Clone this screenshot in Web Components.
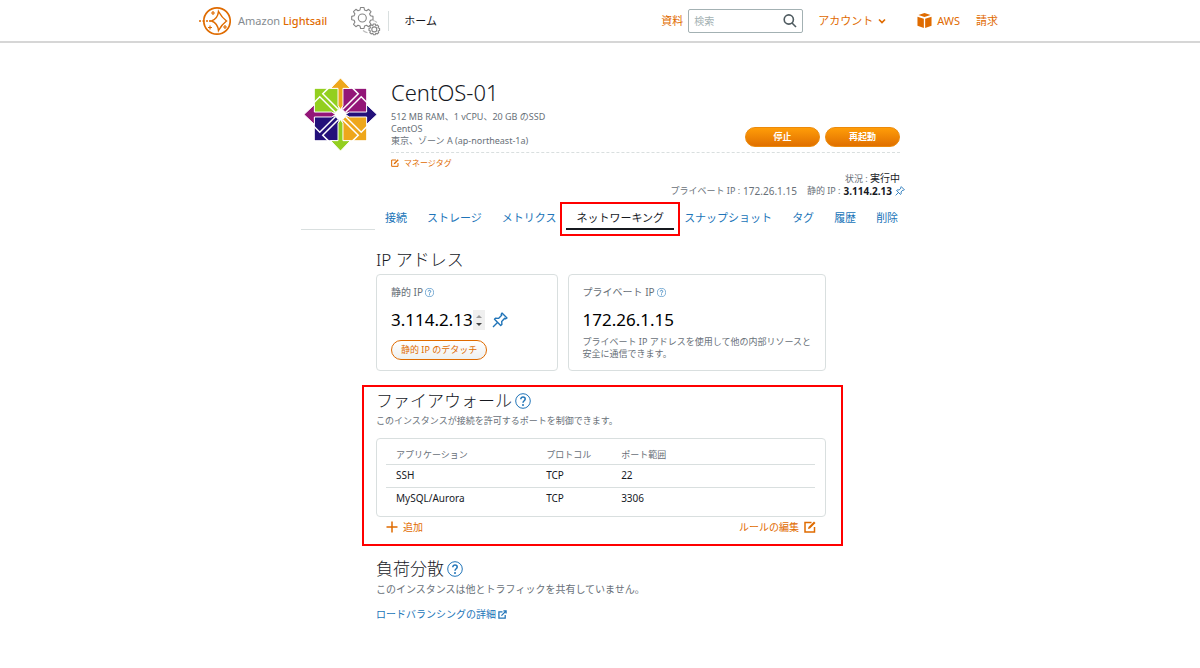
<!DOCTYPE html>
<html lang="ja">
<head>
<meta charset="utf-8">
<meta name="viewport" content="width=device-width, initial-scale=1">
<title>CentOS-01 - Amazon Lightsail</title>
<style>
  :root {
    --orange: #df6b00;
    --blue: #2074b8;
    --ink: #16191f;
    --muted: #687078;
    --line: #d9dfdf;
    --mark: #ff0000;
  }
  body {
    margin: 0;
    background: #fff;
    color: var(--ink);
    font-family: "Noto Sans", "Noto Sans CJK JP", sans-serif;
    font-size: 10px;
    line-height: 12px;
  }
  main {
    max-width: 600px;
    margin: 0 auto;
    padding: 35px 0 40px;
  }
  .content {
    max-width: 450px;
    margin: 0 74px 0 76px;
  }
  .cards {
    display: flex;
    gap: 10px;
  }
  .cards info-card:first-child { flex: 182; }
  .cards info-card:last-child { flex: 258; }
</style>
</head>
<body>
<site-header></site-header>
<main>
  <instance-summary></instance-summary>
  <instance-tabs></instance-tabs>
  <div class="content">
    <section-title>IP アドレス</section-title>
    <div class="cards">
      <info-card label="静的 IP" address="3.114.2.13" pinned>
        <pill-button kind="outline">静的 IP のデタッチ</pill-button>
      </info-card>
      <info-card label="プライベート IP" address="172.26.1.15">プライベート IP アドレスを使用して他の内部リソースと<br>安全に通信できます。</info-card>
    </div>
    <firewall-panel></firewall-panel>
    <load-balancing></load-balancing>
  </div>
</main>

<script>
const ICONS = {
  lightsail: ['0 0 32 30', `<g fill="none" stroke="#df6b00" stroke-width="1.7"><circle cx="18" cy="15" r="13.2"/><path d="M19.500 5.500C19 10 16.500 13.500 12.500 15C16.500 16.500 19 20 19.500 24.500C21.500 21 24 17.500 27.500 15C24 12.500 21.500 9 19.500 5.500Z" stroke-width="1.500"/><path d="M0 15H2M3.500 15H5.500M7 15H9M10 15H12" stroke-width="1.300"/><path d="M14 5V9M12 7H16M11 19.500V23.500M9 21.500H13M26 19V23M24 21H28" stroke-width="1.200"/></g>`],
  gears: ['0 0 30 30', `<g fill="none" stroke="#858585" stroke-width="1.100" stroke-linejoin="round"><path d="M9.500 1.500H13L13.500 4L15.500 4.800L17.600 3.300L20 5.700L18.600 7.900L19.500 9.800L22 10.400V13.700L19.500 14.200L18.600 16.200L20 18.300L17.600 20.700L15.500 19.300L13.500 20.100L13 22.500H9.600L9 20.100L7 19.300L4.900 20.700L2.500 18.300L3.900 16.200L3.100 14.200L.7 13.700V10.400L3.100 9.800L3.900 7.900L2.500 5.700L4.900 3.300L7 4.800L9 4Z"/><circle cx="11.300" cy="12" r="4"/><path d="M22.300 18H24.300L24.800 19.600L26.300 18.900L27.700 20.300L27 21.800L28.600 22.400V24.400L27 24.900L27.700 26.500L26.300 27.900L24.800 27.200L24.300 28.700H22.300L21.800 27.200L20.200 27.900L18.800 26.500L19.500 24.900L18 24.400V22.400L19.500 21.800L18.800 20.300L20.200 18.900L21.800 19.600Z"/><circle cx="23.300" cy="23.400" r="2.500"/><path d="M12 24.500Q14 26.300 16.500 26.700M22 14.500Q24 14.700 26 16.500" stroke="#bbb"/></g>`],
  search: ['0 0 14 14', `<g fill="none" stroke="#4f5b60" stroke-width="1.600"><circle cx="5.800" cy="5.500" r="4.600"/><path d="M9 9L13 13"/></g>`],
  chevron: ['0 0 8 8', `<path d="M1 2.500L4 5.500L7 2.500" fill="none" stroke="#df6b00" stroke-width="1.700"/>`],
  cube: ['0 0 16 16', `<path d="M8 0L14.500 2L8 4.200L1.500 2ZM.5 4L7.300 6V16L.5 13.500ZM15.500 4L8.700 6V16L15.500 13.500Z" fill="#df6b00"/>`],
  edit: ['0 0 12 12', `<path d="M7.500 1.500H1V11H10.500V6" fill="none" stroke="#df6b00" stroke-width="1.500"/><path d="M4 8L4.500 6L10 .5L11.500 2L6 7.500Z" fill="#df6b00"/>`],
  pin: ['0 0 16 16', `<path d="M10 1L15 6L13.500 6.800L12.700 6.300L9.700 9.500L9.900 12.500L8.700 13.500L2.500 7.300L3.500 6.200L6.500 6.400L9.700 3.300L9.200 2.400ZM5.500 10.500L1 15" fill="none" stroke="#2074b8" stroke-width="1.400" stroke-linejoin="round"/>`],
  plus: ['0 0 12 12', `<path d="M6 .5V11.500M.5 6H11.500" stroke="#df6b00" stroke-width="1.500"/>`],
  external: ['0 0 10 10', `<path d="M5 2H1V9H8V5.500M3.800 6.200L8.800 1.200M6 1H9V4" fill="none" stroke="#2074b8" stroke-width="1.400"/>`],
  help: ['0 0 16 16', `<circle cx="8" cy="8" r="7.300" fill="none" stroke="#2074b8"/><path d="M5.800 6.200C5.800 3.300 10.200 3.400 10.200 6.100C10.200 7.800 8 7.800 8 9.800" fill="none" stroke="#2074b8" stroke-width="1.500"/><circle cx="8" cy="12" r="1" fill="#2074b8"/>`],
  centos: ['3 3 75 75', `
    <path d="M15 14H39V38H15Z" fill="#93cf1f"/><path d="M43 14H67V38H43Z" fill="#931678"/>
    <path d="M15 42H39V66H15Z" fill="#23107a"/><path d="M43 42H67V66H43Z" fill="#eea71b"/>
    <g fill="none" stroke="#fff" stroke-width="1.500">
      <path id="cut" d="M29 13L23 19L39 35M14 28L20 22L36 38"/>
      <use href="#cut" transform="rotate(90 41 40)"/><use href="#cut" transform="rotate(180 41 40)"/><use href="#cut" transform="rotate(270 41 40)"/>
    </g>
    <g stroke="#fff" stroke-width="1">
      <path d="M41 3L51 13.500H43.500V31L41 35L38.500 31V13.500H31Z" fill="#eea71b"/>
      <path d="M41 3L51 13.500H43.500V31L41 35L38.500 31V13.500H31Z" fill="#23107a" transform="rotate(90 41 40)"/>
      <path d="M41 3L51 13.500H43.500V31L41 35L38.500 31V13.500H31Z" fill="#93cf1f" transform="rotate(180 41 40)"/>
      <path d="M41 3L51 13.500H43.500V31L41 35L38.500 31V13.500H31Z" fill="#931678" transform="rotate(270 41 40)"/>
    </g>
    <circle cx="41" cy="40" r="5.500" fill="#fff"/>`]
};

const RESET = `
  *, *::before { box-sizing: border-box; }
  a { color: inherit; text-decoration: none; }
  button, input { font: inherit; color: inherit; margin: 0; padding: 0; border: 0; background: none; }
  h1, h2, p { margin: 0; font-weight: 400; }
`;

class BaseElement extends HTMLElement {
  connectedCallback() {
    if (this.shadowRoot) return;
    this.attachShadow({ mode: 'open' });
    this.shadowRoot.innerHTML = `<style>${RESET}${this.styles()}</style>${this.markup()}`;
  }
}

// <app-icon name="pin" size="16">, size is the width in pixels
class AppIcon extends BaseElement {
  styles() {
    return `
      :host { display: inline-block; flex: none; width: ${this.getAttribute('size')}px; line-height: 0; }
      svg { display: block; width: 100%; }
    `;
  }

  markup() {
    const [box, shapes] = ICONS[this.getAttribute('name')];
    return `<svg viewBox="${box}" aria-hidden="true">${shapes}</svg>`;
  }
}

class SiteHeader extends BaseElement {
  styles() {
    return `
      :host { display: block; border-bottom: 2px solid #d6d6d6; font-size: 11px; line-height: 16px; }
      .bar { display: flex; align-items: center; max-width: 802px; height: 41px; margin: 0 auto; color: var(--orange); }
      .brand { display: flex; align-items: center; gap: 7px; }
      .brand span { color: #858b90; }
      .brand b { font-weight: 500; color: var(--orange); }
      .gears { display: flex; margin-left: 24px; }
      .home { margin-left: 7px; padding: 2px 0 2px 15px; border-left: 1px solid var(--line); color: var(--ink); }
      nav { display: flex; align-items: center; margin-left: auto; padding-right: 3px; }
      .search { display: flex; align-items: center; width: 115px; height: 24px; margin: 0 15px 0 5px; padding: 0 5px; border: 1px solid #a3b1b3; border-radius: 2px; }
      .search input { flex: 1; min-width: 0; font-size: 10px; color: var(--ink); outline: 0; }
      .search input::placeholder { color: #a3b1b3; opacity: 1; }
      .account { display: flex; align-items: center; gap: 5px; margin-right: 31px; }
      .aws { display: flex; align-items: center; gap: 5px; margin-right: 16px; }
    `;
  }

  markup() {
    return `
      <header class="bar">
        <a class="brand" href="#"><app-icon name="lightsail" size="32"></app-icon><div><span>Amazon</span> <b>Lightsail</b></div></a>
        <div class="gears"><app-icon name="gears" size="30"></app-icon></div>
        <a class="home" href="#">ホーム</a>
        <nav>
          <a href="#">資料</a>
          <label class="search"><input type="text" placeholder="検索" aria-label="検索"><app-icon name="search" size="14"></app-icon></label>
          <button class="account">アカウント<app-icon name="chevron" size="8"></app-icon></button>
          <a class="aws" href="#"><app-icon name="cube" size="15"></app-icon>AWS</a>
          <a href="#">請求</a>
        </nav>
      </header>
    `;
  }
}

class PillButton extends BaseElement {
  styles() {
    return `
      :host { display: inline-block; vertical-align: top; }
      button { display: block; height: 20px; border-radius: 10px; font-size: 9px; line-height: 18px; white-space: nowrap; cursor: pointer; }
      .solid { width: 75px; background: linear-gradient(#ff9d08, #e07000); border: 1px solid #ec8a0a; color: #fff; font-weight: 600; }
      .outline { padding: 0 9px; background: linear-gradient(#fff, #eef0f0); border: 1px solid var(--orange); color: var(--orange); }
    `;
  }

  markup() {
    return `<button class="${this.getAttribute('kind') || 'solid'}"><slot></slot></button>`;
  }
}

class InstanceSummary extends BaseElement {
  styles() {
    return `
      :host { display: block; font-size: 9px; color: var(--muted); }
      .top { display: flex; gap: 14px; padding-left: 3px; }
      .info { flex: 1; }
      h1 { font-size: 22px; line-height: 28px; font-weight: 300; color: var(--ink); margin-bottom: 5px; }
      .details { display: flex; justify-content: space-between; align-items: flex-end; padding-bottom: 5px; border-bottom: 1px dashed var(--line); }
      .actions { display: flex; gap: 5px; }
      .tags { display: inline-flex; align-items: center; gap: 5px; padding-top: 4px; font-size: 8px; color: var(--orange); }
      .status { display: flex; flex-direction: column; align-items: flex-end; padding-top: 2px; }
      .status strong { color: var(--ink); font-size: 10px; }
      .status .state { font-weight: 400; }
      .status .plain { font-size: 10px; margin-right: 7px; }
      .addresses { display: flex; align-items: center; gap: 3px; margin-right: -5px; }
    `;
  }

  markup() {
    return `
      <div class="top">
        <app-icon name="centos" size="74"></app-icon>
        <div class="info">
          <h1>CentOS-01</h1>
          <div class="details">
            <div>512 MB RAM、1 vCPU、20 GB のSSD<br>CentOS<br>東京、ゾーン A (ap-northeast-1a)</div>
            <div class="actions"><pill-button>停止</pill-button><pill-button>再起動</pill-button></div>
          </div>
          <a class="tags" href="#"><app-icon name="edit" size="8"></app-icon>マネージタグ</a>
        </div>
      </div>
      <div class="status">
        <div>状況 : <strong class="state">実行中</strong></div>
        <div class="addresses"><span>プライベート IP :</span><span class="plain">172.26.1.15</span><span>静的 IP :</span><strong>3.114.2.13</strong><app-icon name="pin" size="10"></app-icon></div>
      </div>
    `;
  }
}

class InstanceTabs extends BaseElement {
  styles() {
    return `
      :host { display: block; margin-top: 11px; font-size: 11px; line-height: 19px; color: var(--blue); }
      nav { display: flex; }
      nav::before { content: ""; flex: none; width: 74px; margin-left: 1px; border-bottom: 1px solid var(--line); }
      a { padding: 0 10px 1px; border-bottom: 2px solid transparent; white-space: nowrap; }
      .active { color: var(--ink); border-color: var(--ink); outline: 2px solid var(--mark); outline-offset: 4px; }
    `;
  }

  markup() {
    const tabs = ['接続', 'ストレージ', 'メトリクス', 'ネットワーキング', 'スナップショット', 'タグ', '履歴', '削除'];
    return `<nav>${tabs.map(tab => `<a href="#"${tab === 'ネットワーキング' ? ' class="active"' : ''}>${tab}</a>`).join('')}</nav>`;
  }
}

class SectionTitle extends BaseElement {
  styles() {
    return `
      :host { display: block; }
      h2 { display: flex; align-items: center; gap: 3px; margin: 18px 0 2px; font-size: 17px; line-height: 24px; font-weight: 300; }
    `;
  }

  markup() {
    return `<h2><slot></slot>${this.hasAttribute('help') ? '<app-icon name="help" size="16"></app-icon>' : ''}</h2>`;
  }
}

class InfoCard extends BaseElement {
  styles() {
    return `
      :host { display: block; min-height: 97px; padding: 11px 14px 10px; border: 1px solid var(--line); border-radius: 4px; box-sizing: border-box; font-size: 9px; color: var(--muted); white-space: nowrap; }
      .label { display: flex; align-items: center; gap: 2px; font-size: 10px; }
      .address { display: flex; align-items: center; height: 24px; margin: 10px 0 4px; font-size: 17px; color: #000; }
      :host([pinned]) .address { margin-bottom: 8px; }
      .stepper { display: flex; flex-direction: column; justify-content: center; gap: 5px; width: 12px; height: 20px; margin-right: 7px; padding: 0 3px; background: #efefef; }
      .stepper i { border: 3px solid transparent; border-top: 0; border-bottom-color: #999; }
      .stepper i + i { border: 3px solid transparent; border-bottom: 0; border-top-color: #444; }
    `;
  }

  markup() {
    const extras = '<span class="stepper"><i></i><i></i></span><app-icon name="pin" size="16"></app-icon>';
    return `
      <div class="label">${this.getAttribute('label')}<app-icon name="help" size="9"></app-icon></div>
      <div class="address">${this.getAttribute('address')}${this.hasAttribute('pinned') ? extras : ''}</div>
      <slot></slot>
    `;
  }
}

class FirewallPanel extends BaseElement {
  styles() {
    return `
      :host { display: block; margin: 14px -17px 0 -14px; padding: 2px 15px 11px 12px; border: 2px solid var(--mark); }
      section-title { margin-top: -18px; }
      p { margin-bottom: 11px; font-size: 9px; color: var(--muted); }
      .box { padding: 8px 10px 6px 9px; border: 1px solid var(--line); border-radius: 4px; }
      table { width: 100%; border-collapse: collapse; table-layout: fixed; }
      th, td { height: 23px; padding: 0 10px 2px; text-align: left; }
      th { height: 17px; padding-bottom: 0; font-size: 9px; font-weight: 400; color: var(--muted); }
      th:nth-child(1) { width: 35%; }
      th:nth-child(2) { width: 75px; }
      tr + tr td { border-top: 1px solid var(--line); }
      thead th { border-bottom: 1px solid var(--line); }
      .links { display: flex; justify-content: space-between; padding: 4px 10px 0; color: var(--orange); }
      .links a { display: flex; align-items: center; gap: 5px; }
    `;
  }

  markup() {
    const rules = [['SSH', 'TCP', '22'], ['MySQL/Aurora', 'TCP', '3306']];
    return `
      <section-title help>ファイアウォール</section-title>
      <p>このインスタンスが接続を許可するポートを制御できます。</p>
      <div class="box">
        <table>
          <thead><tr><th>アプリケーション</th><th>プロトコル</th><th>ポート範囲</th></tr></thead>
          <tbody>${rules.map(rule => `<tr>${rule.map(cell => `<td>${cell}</td>`).join('')}</tr>`).join('')}</tbody>
        </table>
      </div>
      <div class="links">
        <a href="#"><app-icon name="plus" size="12"></app-icon>追加</a>
        <a href="#">ルールの編集<app-icon name="edit" size="12"></app-icon></a>
      </div>
    `;
  }
}

class LoadBalancing extends BaseElement {
  styles() {
    return `
      :host { display: block; margin-top: -8px; }
      section-title { padding-top: 1px; }
      p { color: var(--muted); margin-bottom: 13px; }
      a { display: inline-flex; align-items: center; gap: 2px; color: var(--blue); }
    `;
  }

  markup() {
    return `
      <section-title help>負荷分散</section-title>
      <p>このインスタンスは他とトラフィックを共有していません。</p>
      <a href="#">ロードバランシングの詳細<app-icon name="external" size="9"></app-icon></a>
    `;
  }
}

customElements.define('app-icon', AppIcon);
customElements.define('site-header', SiteHeader);
customElements.define('pill-button', PillButton);
customElements.define('instance-summary', InstanceSummary);
customElements.define('instance-tabs', InstanceTabs);
customElements.define('section-title', SectionTitle);
customElements.define('info-card', InfoCard);
customElements.define('firewall-panel', FirewallPanel);
customElements.define('load-balancing', LoadBalancing);
</script>
</body>
</html>
